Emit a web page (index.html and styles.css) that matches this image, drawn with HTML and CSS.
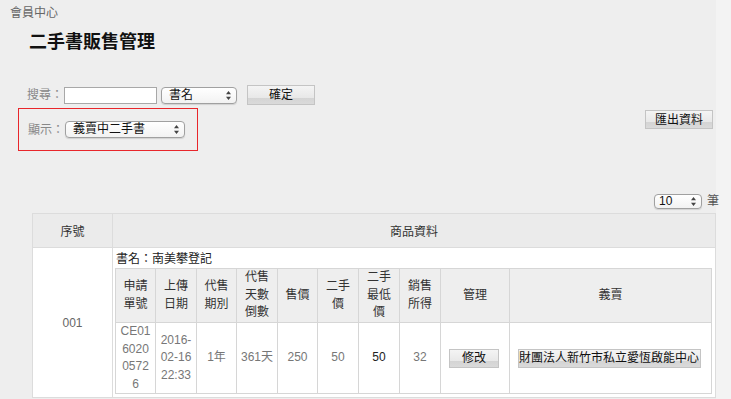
FILE: index.html
```html
<!DOCTYPE html>
<html lang="zh-Hant">
<head>
<meta charset="utf-8">
<title>二手書販售管理</title>
<link rel="stylesheet" href="styles.css">
</head>
<body>
<div class="page">
  <div class="crumb">會員中心</div>
  <h1 class="title">二手書販售管理</h1>

  <div class="search-row">
    <span class="label">搜尋：</span>
    <input class="text-input" type="text">
    <span class="sel sel-field">
      <select><option>書名</option></select>
      <svg class="arrows" width="5" height="9" viewBox="0 0 5 9"><path d="M2.5 0 L5 3.2 L0 3.2 Z M2.5 9 L5 5.8 L0 5.8 Z" fill="#444"/></svg>
    </span>
    <button class="btn btn-ok">確定</button>
  </div>

  <div class="filter-row">
    <div class="filter-box">
      <span class="label">顯示：</span>
      <span class="sel sel-show">
        <select><option>義賣中二手書</option></select>
        <svg class="arrows" width="5" height="9" viewBox="0 0 5 9"><path d="M2.5 0 L5 3.2 L0 3.2 Z M2.5 9 L5 5.8 L0 5.8 Z" fill="#444"/></svg>
      </span>
    </div>
    <button class="btn btn-export">匯出資料</button>
  </div>

  <div class="pager">
    <span class="sel sel-count">
      <select><option>10</option></select>
      <svg class="arrows" width="5" height="9" viewBox="0 0 5 9"><path d="M2.5 0 L5 3.2 L0 3.2 Z M2.5 9 L5 5.8 L0 5.8 Z" fill="#444"/></svg>
    </span>
    <span class="unit">筆</span>
  </div>

  <table class="list">
    <colgroup><col class="c-no"><col></colgroup>
    <thead>
      <tr><th>序號</th><th>商品資料</th></tr>
    </thead>
    <tbody>
      <tr>
        <td class="no">001</td>
        <td class="info">
          <div class="book-name">書名：南美攀登記</div>
          <table class="detail">
            <colgroup>
              <col class="w40"><col class="w41"><col class="w40"><col class="w41"><col class="w40"><col class="w41"><col class="w41"><col class="w41"><col class="w69"><col>
            </colgroup>
            <thead>
              <tr>
                <th>申請單號</th><th>上傳日期</th><th>代售期別</th><th>代售天數倒數</th><th>售價</th><th>二手價</th><th>二手最低價</th><th>銷售所得</th><th>管理</th><th>義賣</th>
              </tr>
            </thead>
            <tbody>
              <tr>
                <td class="brk">CE01602005726</td>
                <td>2016-02-16 22:33</td>
                <td>1年</td>
                <td class="nowrap">361天</td>
                <td>250</td>
                <td>50</td>
                <td class="dark">50</td>
                <td>32</td>
                <td><button class="btn btn-edit">修改</button></td>
                <td><button class="btn btn-charity">財團法人新竹市私立愛恆啟能中心</button></td>
              </tr>
            </tbody>
          </table>
        </td>
      </tr>
    </tbody>
  </table>
</div>
</body>
</html>
```

FILE: styles.css
```css
html, body {
  margin: 0;
  padding: 0;
  overflow: hidden;
}
body {
  background: linear-gradient(to right, #eeeeee 0, #eeeeee 716px, #f3f3f3 716px);
  font-family: "Liberation Sans", "Noto Sans CJK TC", sans-serif;
  font-size: 12px;
  color: #333;
  height: 399px;
}
.page {
  width: 731px;
}
.crumb {
  padding: 5px 0 0 10px;
  font-size: 12px;
  line-height: 16px;
  color: #666;
}
.title {
  margin: 9px 0 0 29px;
  font-size: 18px;
  line-height: 24px;
  font-weight: bold;
  color: #111;
}
.label {
  color: #888;
  font-size: 12px;
  line-height: 16px;
}
.search-row {
  display: flex;
  align-items: center;
  margin: 31px 0 0 27px;
  height: 20px;
}
.text-input {
  box-sizing: border-box;
  width: 93px;
  height: 17px;
  margin: 0 0 0 1px;
  padding: 0 3px;
  border: 1px solid #a8a8a8;
  background: #fff;
  font: 12px "Liberation Sans", "Noto Sans CJK TC", sans-serif;
}
.sel {
  position: relative;
  display: inline-block;
}
.sel select {
  box-sizing: border-box;
  -webkit-appearance: none;
  appearance: none;
  display: block;
  height: 17px;
  margin: 0;
  padding: 0 0 0 7px;
  border: 1px solid #a0a0a0;
  border-radius: 4px;
  background: linear-gradient(#ffffff, #f2f2f2);
  font: 12px/15px "Liberation Sans", "Noto Sans CJK TC", sans-serif;
  color: #111;
  box-shadow: 0 1px 1px rgba(0,0,0,0.12);
}
.sel .arrows {
  position: absolute;
  right: 6px;
  top: 4px;
}
.sel-field {
  margin-left: 4px;
}
.sel-field select {
  width: 76px;
}
.btn {
  box-sizing: border-box;
  margin: 0;
  padding: 0;
  border: 1px solid #c4c4c4;
  border-radius: 0;
  background: linear-gradient(#f4f4f4 0, #e8e8e8 65%, #d4d4d4 66%, #dadada 100%);
  font: 12px "Liberation Sans", "Noto Sans CJK TC", sans-serif;
  color: #111;
  line-height: 16px;
}
.btn-ok {
  width: 68px;
  height: 20px;
  margin-left: 10px;
}
.filter-row {
  display: flex;
  justify-content: space-between;
  align-items: flex-start;
  width: 713px;
  margin-top: 3px;
}
.filter-box {
  box-sizing: border-box;
  display: flex;
  align-items: center;
  width: 180px;
  height: 43px;
  margin-left: 18px;
  padding-left: 9px;
  border: 1px solid #e8262b;
}
.sel-show {
  margin-left: 1px;
}
.sel-show select {
  width: 120px;
  height: 17px;
}
.btn-export {
  width: 68px;
  height: 19px;
  margin-top: 2px;
}
.pager {
  display: flex;
  justify-content: flex-end;
  align-items: center;
  height: 16px;
  margin-top: 42px;
  padding-right: 12px;
}
.sel-count select {
  width: 48px;
  height: 15px;
  line-height: 13px;
  padding-left: 4px;
}
.sel-count .arrows {
  top: 3px;
}
.unit {
  margin-left: 5px;
  color: #555;
  font-size: 12px;
  line-height: 16px;
}
.list {
  margin: 4px 0 0 32px;
  width: 684px;
  border-collapse: collapse;
  table-layout: fixed;
}
.list .c-no {
  width: 80px;
}
.list > thead > tr > th {
  height: 33px;
  padding: 0;
  border: 1px solid #dcdcdc;
  background: #ebebeb;
  font-weight: normal;
  color: #333;
  font-size: 12px;
}
.list > tbody > tr > td {
  border: 1px solid #dcdcdc;
  background: #fff;
}
.list td.no {
  text-align: center;
  vertical-align: middle;
  color: #666;
  padding: 0;
}
.list td.info {
  padding: 2px 2px 3px 2px;
  vertical-align: top;
}
.book-name {
  line-height: 18px;
  padding-left: 1px;
  color: #222;
}
.detail {
  width: 597px;
  border-collapse: collapse;
  table-layout: fixed;
}
.detail .w40 { width: 40px; }
.detail .w41 { width: 41px; }
.detail .w69 { width: 69px; }
.detail th,
.detail td {
  border: 1px solid #d6d6d6;
  padding: 0 4px;
  text-align: center;
  vertical-align: middle;
  line-height: 17.5px;
  font-size: 12px;
}
.detail th {
  background: #eeeeee;
  font-weight: normal;
  color: #333;
  height: 53px;
}
.detail td {
  background: #fff;
  color: #777;
  height: 70px;
}
.detail td.brk {
  word-break: break-all;
}
.detail td.nowrap {
  white-space: nowrap;
  padding: 0;
}
.detail td.dark {
  color: #222;
}
.btn-edit {
  width: 50px;
  height: 19px;
  margin-left: -2px;
}
.btn-charity {
  width: 183px;
  height: 19px;
  margin-left: -3px;
  white-space: nowrap;
}
```
